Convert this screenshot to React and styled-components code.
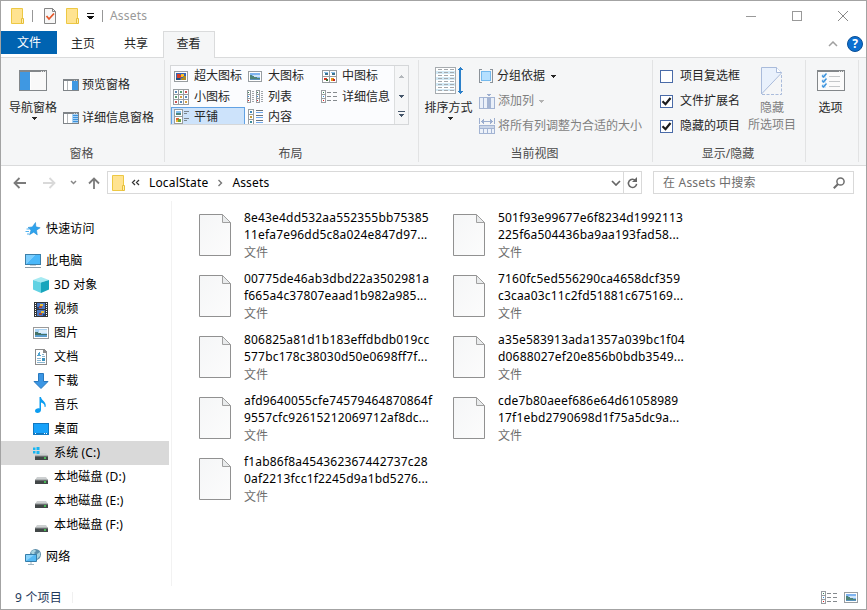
import React, { useState } from "react";
import styled, { createGlobalStyle } from "styled-components";

const GlobalStyle = createGlobalStyle`
  * {
    box-sizing: border-box;
  }

  body {
    margin: 0;
    overflow: hidden;
    font-family: "Noto Sans", "Noto Sans CJK SC", sans-serif;
    font-size: 12px;
    line-height: 16px;
    color: #000;
  }

  svg {
    display: block;
    flex: none;
  }
`;

const Window = styled.div`
  display: flex;
  flex-direction: column;
  width: 867px;
  height: 610px;
  background: #fff;
  border: 1px solid #a3a3a3;
`;

const TitleBar = styled.header`
  display: flex;
  align-items: center;
  height: 30px;
  padding: 0 18px 0 10px;
`;

const TitleDivider = styled.span`
  width: 1px;
  height: 12px;
  margin-left: ${(props) => props.$left}px;
  margin-right: ${(props) => props.$right}px;
  background: #979797;
`;

const QuickFolder = styled.span`
  margin: 0 7px 0 10px;
`;

const Title = styled.span`
  color: #999;
  letter-spacing: 0.2px;
`;

const WindowButtons = styled.div`
  display: flex;
  align-items: center;
  gap: 36px;
  margin-left: auto;
`;

const TabRow = styled.nav`
  display: flex;
  height: 27px;
  border-bottom: 1px solid #dadbdc;
`;

const FileTab = styled.button`
  width: 56px;
  height: 23px;
  padding: 0;
  border: none;
  background: #0063b1;
  color: #fff;
  font: inherit;
`;

const Tab = styled.button`
  width: ${(props) => props.$width}px;
  height: ${(props) => (props.$active ? 27 : 26)}px;
  padding: 0 1px 2px 0;
  border: 1px solid ${(props) => (props.$active ? "#dadbdc" : "transparent")};
  border-bottom: none;
  background: ${(props) => (props.$active ? "#f5f6f7" : "transparent")};
  color: #262626;
  font: inherit;
`;

const TabTools = styled.div`
  display: flex;
  align-items: center;
  gap: 9px;
  margin-left: auto;
  padding-right: 3px;
`;

const Help = styled.span`
  width: 16px;
  height: 16px;
  border: 1px solid #0a4f96;
  border-radius: 50%;
  background: #0c6fd0;
  color: #fff;
  font-weight: 700;
  line-height: 14px;
  text-align: center;
`;

const Ribbon = styled.section`
  display: flex;
  height: 108px;
  padding-top: 2px;
  background: #f5f6f7;
  border-bottom: 1px solid #dadbdc;
`;

const Group = styled.div`
  display: flex;
  flex-direction: column;
  width: ${(props) => props.$width}px;
  height: 102px;
  border-right: 1px solid #e2e3e4;
`;

const GroupBody = styled.div`
  display: flex;
  height: 86px;
  padding: ${(props) => props.$pad || "0"};
`;

const GroupLabel = styled.div`
  height: 16px;
  padding-right: 2px;
  text-align: center;
  color: #4c4c4c;
`;

const BigButton = styled.button`
  display: flex;
  flex-direction: column;
  align-items: center;
  width: ${(props) => props.$width}px;
  padding: ${(props) => props.$top}px 0 0 ${(props) => props.$left || 0}px;
  border: none;
  background: none;
  color: ${(props) => (props.$disabled ? "#7f7f7f" : "#262626")};
  font: inherit;
  line-height: 17px;
  white-space: nowrap;
`;

const BigIcon = styled.span`
  display: flex;
  justify-content: center;
  height: ${(props) => props.$height}px;
`;

const MenuCaret = styled.span`
  padding: 1px 0 0 3px;
`;

const InlineCaret = styled.span`
  padding-left: 2px;
`;

const ButtonStack = styled.div`
  display: flex;
  flex-direction: column;
  gap: ${(props) => props.$gap}px;
  padding: ${(props) => props.$pad};
`;

const SmallButton = styled.button`
  display: flex;
  align-items: center;
  gap: ${(props) => props.$gap || 3}px;
  height: 16px;
  padding: 0;
  border: none;
  background: none;
  color: ${(props) => (props.$disabled ? "#7f7f7f" : "#262626")};
  font: inherit;
  white-space: nowrap;
`;

const Gallery = styled.div`
  display: flex;
  width: 239px;
  height: 60px;
  border: 1px solid #d5d7d9;
  background: #fbfcfe;
`;

const GalleryGrid = styled.div`
  display: grid;
  grid-template-columns: 74px 74px 75px;
  grid-template-rows: 20px 21px 19px;
  width: 223px;
  height: 58px;
  overflow: hidden;
`;

const GalleryItem = styled.div`
  display: flex;
  align-items: center;
  gap: 5px;
  color: #262626;
  white-space: nowrap;
  border: ${(props) => (props.$active ? "1px solid #62a2e4" : "none")};
  padding: ${(props) => (props.$active ? "0 0 0 1px" : "0 0 0 2px")};
  background: ${(props) => (props.$active ? "#cde3fb" : "transparent")};
`;

const GalleryScroll = styled.div`
  display: grid;
  grid-template-rows: 20px 20px 16px;
  flex: 1;
  place-items: center;
  align-content: start;
  border-left: 1px solid #dcdedf;
  background: #f5f6f7;
`;

const CheckLabel = styled.label`
  display: flex;
  align-items: center;
  gap: 7px;
  height: 16px;
  color: #262626;
  white-space: nowrap;
`;

const CheckBox = styled.span`
  width: 13px;
  height: 13px;
  border: 1px solid #4a6ba8;
  background: #fff;
`;

const AddressRow = styled.div`
  display: flex;
  align-items: center;
  height: 33px;
  padding: 0 12px;
`;

const NavButtons = styled.div`
  display: flex;
  align-items: center;
  width: 94px;
`;

const NavIcon = styled.span`
  margin-right: ${(props) => props.$right}px;
`;

const AddressBox = styled.div`
  display: flex;
  align-items: center;
  width: 535px;
  height: 23px;
  padding-left: 4px;
  border: 1px solid #d9d9d9;
  white-space: nowrap;
`;

const Overflow = styled.span`
  margin-left: 5px;
`;

const Crumb = styled.span`
  margin: 0 9px;
  letter-spacing: 0.15px;
`;

const AddressTools = styled.div`
  display: flex;
  align-items: center;
  height: 21px;
  margin-left: auto;
`;

const Refresh = styled.span`
  display: flex;
  align-items: center;
  justify-content: center;
  width: 18px;
  height: 21px;
  margin-left: 2px;
  border-left: 1px solid #d9d9d9;
`;

const SearchBox = styled.div`
  display: flex;
  align-items: center;
  justify-content: space-between;
  width: 201px;
  height: 23px;
  margin-left: 11px;
  padding: 0 8px 0 9px;
  border: 1px solid #d9d9d9;
  color: #6d6d6d;
  letter-spacing: 0.2px;
`;

const Main = styled.main`
  display: flex;
  height: 387px;
  padding-top: 2px;
`;

const Sidebar = styled.aside`
  width: 171px;
  padding-top: 16px;
  border-right: 1px solid #f2f2f2;
`;

const TreeRow = styled.div`
  display: flex;
  align-items: center;
  gap: 5px;
  width: 168px;
  height: 24px;
  margin-top: ${(props) => props.$space || 0}px;
  padding-left: ${(props) => (props.$nested ? 32 : 24)}px;
  background: ${(props) => (props.$selected ? "#d9d9d9" : "transparent")};
  white-space: pre;
  letter-spacing: 0.15px;
`;

const FileGrid = styled.div`
  display: grid;
  grid-template-columns: 254px 254px;
  grid-auto-rows: 61px;
  padding: 8px 0 0 27px;
`;

const FileItem = styled.div`
  display: flex;
  gap: 13px;
`;

const FilePicture = styled.span`
  padding-top: 5px;
`;

const FileText = styled.div`
  line-height: 17px;
  white-space: nowrap;
`;

const FileName = styled.div`
  letter-spacing: 0.18px;
`;

const FileType = styled.div`
  margin-top: 1px;
  color: #6d6d6d;
`;

const StatusBar = styled.footer`
  display: flex;
  align-items: center;
  height: 23px;
  padding: 0 8px 0 14px;
  color: #1e395b;
  letter-spacing: 0.2px;
`;

const StatusDivider = styled.span`
  width: 1px;
  height: 11px;
  margin-left: 10px;
  background: #f0f0f0;
`;

const StatusViews = styled.div`
  display: flex;
  align-items: center;
  gap: 7px;
  margin-left: auto;
`;

const IconSlot = styled.span`
  display: flex;
  justify-content: center;
  width: 16px;
`;

const Svg = ({ w, h, smooth, children }) => (
  <svg
    width={w}
    height={h}
    viewBox={`0 0 ${w} ${h}`}
    fill="none"
    shapeRendering={smooth ? "auto" : "crispEdges"}
  >
    {children}
  </svg>
);

const Caret = ({ color = "#262626" }) => (
  <Svg w={5} h={3}>
    <path d="M0 0h5v1h-1v1h-1v1h-1v-1h-1v-1h-1z" fill={color} />
  </Svg>
);

const FolderIcon = () => (
  <Svg w={14} h={16} smooth>
    <path d="M.5.5h11v15h-11z" fill="#ffe391" stroke="#edc843" />
    <path d="M10.5 10.5h2v5h-2z" fill="#fff0ad" stroke="#e6be3a" />
  </Svg>
);

const CheckDocIcon = () => (
  <Svg w={12} h={16} smooth>
    <path d="M.5.5h8l3 3v12h-11z" fill="#f7f7f7" stroke="#858585" />
    <path d="M8.5.5v3h3" stroke="#858585" />
    <path d="M2.5 8l2.5 3 5-5.5" stroke="#e4572a" strokeWidth="1.8" />
  </Svg>
);

const PaneIcon = ({ kind }) => (
  <Svg w={16} h={12}>
    <rect width="16" height="12" fill="#7f8488" />
    <rect x="1" y="2" width="14" height="9" fill="#fff" />
    <path d="M11 1h1v1h-1zM13 1h1v1h-1z" fill="#d0d2d4" />
    <rect x="4" y="2" width="1" height="9" fill="#b5b9bc" />
    {kind === "preview" ? (
      <rect x="9" y="2" width="6" height="9" fill="#3f98e2" />
    ) : (
      <>
        <rect x="9" y="2" width="6" height="9" fill="#a9d2f5" />
        <path d="M10 3h5v1h-5zM10 5h5v1h-5zM10 7h5v1h-5zM10 9h5v1h-5z" fill="#3c92dc" />
      </>
    )}
  </Svg>
);

const NavPaneIcon = () => (
  <Svg w={28} h={21}>
    <rect width="28" height="21" fill="#83878a" />
    <rect x="1" y="2" width="26" height="18" fill="#f9f9f9" />
    <path d="M22 1h1v1h-1zM24 1h1v1h-1zM26 1h1v1h-1z" fill="#e4e4e4" />
    <rect x="1" y="2" width="10" height="18" fill="#3f98e2" />
    <rect x="11" y="2" width="1" height="18" fill="#fff" />
  </Svg>
);

// small landscape used by the view icons
const PhotoIcon = () => (
  <Svg w={14} h={11}>
    <rect width="14" height="11" fill="#989da1" />
    <rect x="1" y="1" width="12" height="9" fill="#fff" />
    <rect x="2" y="2" width="10" height="7" fill="#7fb4f0" />
    <rect x="5" y="4" width="7" height="2" fill="#cfe4f8" />
    <path d="M2 4h2v1h2v1h3v1h3v1H2z" fill="#4f8478" />
    <rect x="2" y="8" width="10" height="1" fill="#5a93bd" />
  </Svg>
);

const ExtraLargeIcon = () => (
  <Svg w={14} h={11}>
    <rect width="14" height="11" fill="#989da1" />
    <rect x="1" y="1" width="12" height="9" fill="#fff" />
    <rect x="2" y="2" width="10" height="7" fill="#3664b5" />
    <path d="M3 3h3v1h1v3h-4z" fill="#d9402a" />
    <path d="M7 3h3v3h-3z" fill="#ffbf25" />
    <path d="M9 5h3v4h-5v-2h2z" fill="#a98b2a" />
    <path d="M2 7h4v2h-4z" fill="#26507e" />
  </Svg>
);

const MediumIcon = () => (
  <Svg w={15} h={13}>
    <rect width="15" height="13" fill="#989da1" />
    <path d="M1 1h6v5h-6zM8 1h6v5h-6zM1 7h6v5h-6zM8 7h6v5h-6z" fill="#fff" />
    <path d="M2 2h4v1h-4zM9 2h4v1h-4z" fill="#8bc1ed" />
    <path d="M3 3h3v2h-3zM10 3h3v2h-3z" fill="#3b7390" />
    <path d="M2 8h3v2h-3z" fill="#d63624" />
    <path d="M4 9h2v2h-2z" fill="#3b6c31" />
    <path d="M9 8h3v3h-3z" fill="#e4941b" />
    <path d="M11 9h2v2h-2z" fill="#c92222" />
  </Svg>
);

const SmallGridIcon = () => (
  <Svg w={16} h={16}>
    <rect width="16" height="16" fill="#989da1" />
    {[1, 6, 11].map((y) => (
      <path key={y} d={`M1 ${y}h4v4h-4zM6 ${y}h4v4h-4zM11 ${y}h4v4h-4z`} fill="#fff" />
    ))}
    <path d="M2 2h2v2h-2zM12 7h2v2h-2zM7 12h2v2h-2z" fill="#5b8ab8" />
    <path d="M7 2h2v2h-2zM2 7h2v2h-2z" fill="#579a70" />
    <path d="M12 2h2v2h-2zM2 12h2v2h-2z" fill="#cf5050" />
    <path d="M7 7h2v2h-2zM12 12h2v2h-2z" fill="#d7a043" />
  </Svg>
);

const ListIcon = () => (
  <Svg w={16} h={13}>
    {[0, 9].map((x) => (
      <g key={x} transform={`translate(${x} 0)`}>
        <rect width="4" height="13" fill="#989da1" />
        <path d="M1 1h2v3h-2zM1 5h2v3h-2zM1 9h2v3h-2z" fill="#fff" />
        <path
          d="M5 1h2v1h-2zM5 3h2v1h-2zM5 5h2v1h-2zM5 7h2v1h-2zM5 9h2v1h-2zM5 11h2v1h-2z"
          fill="#a2a6aa"
        />
        <rect x="1" y="2" width="1" height="1" fill="#36845a" />
        <rect x="1" y="6" width="1" height="1" fill="#2b8bdf" />
        <rect x="1" y="10" width="1" height="1" fill="#d22" />
      </g>
    ))}
  </Svg>
);

const DetailsIcon = () => (
  <Svg w={16} h={13}>
    <rect width="5" height="13" fill="#989da1" />
    <path d="M1 1h3v3h-3zM1 5h3v3h-3zM1 9h3v3h-3z" fill="#fff" />
    <rect x="2" y="2" width="1" height="1" fill="#36845a" />
    <rect x="2" y="6" width="1" height="1" fill="#2b8bdf" />
    <rect x="2" y="10" width="1" height="1" fill="#d22" />
    <path
      d="M6 2h4v1h-4zM12 2h4v1h-4zM6 6h4v1h-4zM12 6h4v1h-4zM6 10h4v1h-4zM12 10h4v1h-4z"
      fill="#858a8e"
    />
  </Svg>
);

const TilesIcon = () => (
  <Svg w={15} h={15}>
    <rect width="9" height="15" fill="#989da1" />
    <path d="M1 1h7v6h-7zM1 8h7v6h-7z" fill="#fff" />
    <path d="M2 2h5v2h-5z" fill="#87bfed" />
    <path d="M2 4h5v2h-5z" fill="#4a8580" />
    <path d="M2 9h3v2h-3z" fill="#db6434" />
    <path d="M4 10h3v3h-3z" fill="#69a33a" />
    <path d="M2 11h2v2h-2z" fill="#eeb532" />
    <path d="M10 2h5v1h-5zM10 4h3v1h-3zM10 9h5v1h-5zM10 11h3v1h-3z" fill="#7b858d" />
  </Svg>
);

const ContentIcon = () => (
  <Svg w={15} h={16}>
    <rect width="6" height="16" fill="#989da1" />
    <path d="M1 1h4v4h-4zM1 6h4v4h-4zM1 11h4v4h-4z" fill="#fff" />
    <rect x="2" y="2" width="2" height="2" fill="#3f88bc" />
    <rect x="2" y="7" width="2" height="2" fill="#c59b37" />
    <rect x="2" y="12" width="2" height="2" fill="#3c8c9c" />
    <path d="M8 1h7v1h-7zM8 6h7v1h-7zM8 11h7v1h-7z" fill="#6b7177" />
    <path d="M8 3h7v1h-7zM8 8h7v1h-7zM8 13h7v1h-7z" fill="#6ea8ef" />
  </Svg>
);

const SortIcon = () => (
  <Svg w={28} h={27}>
    <rect width="21" height="27" fill="#a6abaf" />
    <rect x="1" y="1" width="19" height="25" fill="#fff" />
    <path d="M1 4h19v3h-19zM1 10h19v3h-19zM1 16h19v3h-19zM1 22h19v2h-19z" fill="#d3eaf6" />
    {[2, 5, 8, 11, 14, 17, 20, 23].map((y) => (
      <path key={y} d={`M3 ${y}h4v1h-4zM9 ${y}h4v1h-4zM15 ${y}h4v1h-4z`} fill="#a5a9ad" />
    ))}
    <path d="M24 2h2v23h-2z" fill="#2c80c9" />
    <path d="M25 0l3 3h-6zM25 27l3-3h-6z" fill="#2c80c9" />
  </Svg>
);

const GroupIcon = () => (
  <Svg w={14} h={14}>
    <path d="M0 0h3v1H1v12h2v1H0zM14 0h-3v1h2v12h-2v1h3z" fill="#8b9299" />
    <rect x="2" y="2" width="10" height="10" fill="#74b9ed" />
    <rect x="3" y="3" width="8" height="8" fill="#b5e0ff" />
  </Svg>
);

const AddColumnIcon = () => (
  <Svg w={16} h={15}>
    <rect y="3" width="16" height="12" fill="#a3b4d3" />
    <path d="M1 4h3v10h-3zM5 4h3v10h-3zM12 4h3v10h-3z" fill="#eaf0f9" />
    <path d="M8 0h4v1h-1v1h-2v-1h-1z" fill="#9caecf" />
  </Svg>
);

const FitColumnsIcon = () => (
  <Svg w={16} h={16}>
    <path d="M0 0h1v6h-1zM15 0h1v6h-1zM2 3h12v1h-12z" fill="#9caecf" />
    <path d="M3 2h1v3h-1zM4 1h1v5h-1zM11 1h1v5h-1zM12 2h1v3h-1z" fill="#9caecf" />
    <rect y="7" width="16" height="9" fill="#a3b4d3" />
    <rect x="1" y="8" width="14" height="2" fill="#cbd6e8" />
    <path d="M1 11h3v4h-3zM5 11h3v4h-3zM9 11h3v4h-3zM13 11h2v4h-2z" fill="#edf2fa" />
  </Svg>
);

const HideIcon = () => (
  <Svg w={22} h={28} smooth>
    <path d="M.5.5h15l5 5L.5 27z" fill="#e9f1fc" />
    <path d="M.5 27V.5h15l5 5V6L.5 27" stroke="#a9bbdb" />
    <path d="M15.5.5v5h5" fill="#fff" stroke="#a9bbdb" />
    <path d="M20.5 8v19.5H.5" stroke="#a9bbdb" strokeDasharray="3 1.5" />
  </Svg>
);

const OptionsIcon = () => (
  <Svg w={28} h={21}>
    <rect width="28" height="21" fill="#83878a" />
    <rect x="1" y="2" width="26" height="18" fill="#fbfbfb" />
    <path d="M22 1h1v1h-1zM24 1h1v1h-1zM26 1h1v1h-1z" fill="#e4e4e4" />
    {[4, 9, 14].map((y) => (
      <g key={y}>
        <rect x="5" y={y} width="4" height="4" fill="#d2e7f8" />
        <path
          d={`M5 ${y + 1.5}l1.5 1.5 3-3.5`}
          stroke="#3a92dc"
          strokeWidth="1.4"
          shapeRendering="auto"
        />
        <rect x="12" y={y + 2} width="11" height="1" fill="#c4c7c9" />
      </g>
    ))}
  </Svg>
);

const FileIcon = () => (
  <Svg w={32} h={42} smooth>
    <defs>
      <linearGradient id="paper" x1="0" y1="0" x2="1" y2="1">
        <stop offset="0" stopColor="#f5f6f7" />
        <stop offset="1" stopColor="#fcfcfc" />
      </linearGradient>
    </defs>
    <path d="M.5.5h23l8 8v33H.5z" fill="url(#paper)" stroke="#919191" />
    <path d="M23.5.5v8h8z" fill="#e9ebec" stroke="#a0a0a0" />
  </Svg>
);

const DriveIcon = ({ system }) => (
  <Svg w={16} h={16} smooth>
    {system && (
      <path d="M0 2.5h2.5V5H0zM3.5 2h3v3h-3zM0 6h2.5v2.5H0zM3.5 6h3v3h-3z" fill="#17b5f2" />
    )}
    <path d={system ? "M7.5 8H13l2 3H2l1-2h4.5z" : "M4 8h9l2 3H2z"} fill="#cdd0d1" />
    <path d="M2 11h13v4H2z" fill="#424748" />
    <path d="M2 11h13" stroke="#8d9293" />
    <path d="M11 13h2" stroke="#47dd57" strokeWidth="1.5" />
  </Svg>
);

const treeIcons = {
  star: (
    <Svg w={16} h={16} smooth>
      <path
        d="M10.5 1.5l.4 4.300 4.300 1-3.700 2.400.8 4.700-3.600-2.700-4.200 2.600 1.500-4.600L3 6.500l4.300-.6z"
        fill="#2ea3ed"
        stroke="#1b85cf"
        strokeWidth=".5"
      />
      <path d="M1.5 8h3M.5 10.5H4M2 13h2" stroke="#4fb2f0" />
    </Svg>
  ),
  pc: (
    <Svg w={16} h={16}>
      <rect y="1" width="16" height="11" fill="#3c7fa9" />
      <rect x="1" y="2" width="14" height="9" fill="#4ab8fa" />
      <path d="M1 11V2h9z" fill="#7bcdfd" />
      <rect y="14" width="16" height="1" fill="#8d9ca6" />
      <rect x="5" y="12" width="6" height="1" fill="#c3d1da" />
    </Svg>
  ),
  cube: (
    <Svg w={16} h={16} smooth>
      <path d="M8 0l8 3-8 2.5L0 3z" fill="#a6eaf2" />
      <path d="M0 3l8 2.5V16l-8-3.5z" fill="#61d2e3" />
      <path d="M16 3L8 5.5V16l8-3.5z" fill="#18a5bc" />
    </Svg>
  ),
  video: (
    <Svg w={14} h={15}>
      <rect width="14" height="15" fill="#333638" />
      <path d="M1.5 1v14M12.5 1v14" stroke="#fff" strokeDasharray="1 1" />
      <path d="M3 1h8v6H3zM3 8h8v6H3z" fill="#4b78c4" />
      <path d="M5 4h3v2H5zM5 11h3v2H5z" fill="#a84a32" />
      <path d="M6 2h3v2H6zM7 9h3v2H7z" fill="#e3bf3c" />
      <path d="M3 5h2v2H3zM9 12h2v2H9z" fill="#294577" />
    </Svg>
  ),
  picture: (
    <Svg w={16} h={12}>
      <rect width="16" height="12" fill="#9a9a9a" />
      <rect x="1" y="1" width="14" height="10" fill="#fff" />
      <rect x="2" y="2" width="12" height="8" fill="#a9d2f3" />
      <rect x="6" y="3" width="8" height="3" fill="#ddeefa" />
      <path d="M2 5h3v1h3v1h6v1H2z" fill="#447267" />
      <rect x="2" y="8" width="12" height="2" fill="#5b9ccb" />
    </Svg>
  ),
  doc: (
    <Svg w={12} h={16}>
      <path d="M0 0h9l3 3v13H0z" fill="#8c8c8c" />
      <path d="M1 1h7v3h3v11H1z" fill="#fff" />
      <path d="M4 3h1v3h1v1H2V6h1V4h1z" fill="#4fa3d0" />
      <path d="M7 5h2v1H7zM7 7h3v1H7zM2 9h4v1H2zM2 11h4v1H2zM2 13h8v1H2z" fill="#8ab4cf" />
      <rect x="7" y="9" width="3" height="3" fill="#3c91bd" />
    </Svg>
  ),
  download: (
    <Svg w={16} h={16} smooth>
      <path d="M5.5.5h5v8H15l-7 7-7-7h4.500z" fill="#3b96e4" stroke="#2878be" />
    </Svg>
  ),
  music: (
    <Svg w={14} h={16} smooth>
      <path
        d="M5.5 0H7c0 3.500 6 4.500 4.500 10h-1C11 7.500 9 6 7 5.500V13c0 3.500-6 4-6 1 0-2 2.500-3 4.500-2.500z"
        fill="#0c9df1"
      />
    </Svg>
  ),
  desktop: (
    <Svg w={16} h={12}>
      <rect width="16" height="12" fill="#1278c0" />
      <rect x="1" y="1" width="14" height="9" fill="#18a2fa" />
      <path d="M2 10h1v1H2zM11 10h1v1h-1zM13 10h1v1h-1z" fill="#fff" />
    </Svg>
  ),
  system: <DriveIcon system />,
  drive: <DriveIcon />,
  network: (
    <Svg w={16} h={16} smooth>
      <circle cx="10.5" cy="5.5" r="5.5" fill="#5d8fab" />
      <path d="M6 3c2-3 5-2 5-1L9 4l2 2-3 2zM12 5l3-2v4l-3 3z" fill="#a9d3df" />
      <path d="M.5 5.500h11v7H.5z" fill="#55b9f4" stroke="#357da9" />
      <path d="M1 12V6h8z" fill="#89d3fc" />
      <path d="M3 15.500h6M6 13v2" stroke="#a0b5c2" />
    </Svg>
  ),
};

const galleryItems = [
  { name: "超大图标", icon: <ExtraLargeIcon /> },
  { name: "大图标", icon: <PhotoIcon /> },
  { name: "中图标", icon: <MediumIcon /> },
  { name: "小图标", icon: <SmallGridIcon /> },
  { name: "列表", icon: <ListIcon /> },
  { name: "详细信息", icon: <DetailsIcon /> },
  { name: "平铺", icon: <TilesIcon /> },
  { name: "内容", icon: <ContentIcon /> },
];

const tree = [
  { name: "快速访问", icon: "star" },
  { name: "此电脑", icon: "pc", space: 8 },
  { name: "3D 对象", icon: "cube", nested: true },
  { name: "视频", icon: "video", nested: true },
  { name: "图片", icon: "picture", nested: true },
  { name: "文档", icon: "doc", nested: true },
  { name: "下载", icon: "download", nested: true },
  { name: "音乐", icon: "music", nested: true },
  { name: "桌面", icon: "desktop", nested: true },
  { name: "系统 (C:)", icon: "system", nested: true },
  { name: "本地磁盘 (D:)", icon: "drive", nested: true },
  { name: "本地磁盘 (E:)", icon: "drive", nested: true },
  { name: "本地磁盘 (F:)", icon: "drive", nested: true },
  { name: "网络", icon: "network", space: 8 },
];

const files = [
  ["8e43e4dd532aa552355bb75385", "11efa7e96dd5c8a024e847d97..."],
  ["501f93e99677e6f8234d1992113", "225f6a504436ba9aa193fad58..."],
  ["00775de46ab3dbd22a3502981a", "f665a4c37807eaad1b982a985..."],
  ["7160fc5ed556290ca4658dcf359", "c3caa03c11c2fd51881c675169..."],
  ["806825a81d1b183effdbdb019cc", "577bc178c38030d50e0698ff7f..."],
  ["a35e583913ada1357a039bc1f04", "d0688027ef20e856b0bdb3549..."],
  ["afd9640055cfe74579464870864f", "9557cfc92615212069712af8dc..."],
  ["cde7b80aeef686e64d61058989", "17f1ebd2790698d1f75a5dc9a..."],
  ["f1ab86f8a454362367442737c28", "0af2213fcc1f2245d9a1bd5276..."],
];

const Check = ({ label, checked, onClick }) => (
  <CheckLabel onClick={onClick}>
    <CheckBox>
      {checked && (
        <Svg w={11} h={11} smooth>
          <path d="M1.5 5.200l3 3 5-6.200" stroke="#1b1b1b" strokeWidth="2.200" />
        </Svg>
      )}
    </CheckBox>
    {label}
  </CheckLabel>
);

const Header = () => (
  <>
    <TitleBar>
      <FolderIcon />
      <TitleDivider $left={7} $right={11} />
      <CheckDocIcon />
      <QuickFolder>
        <FolderIcon />
      </QuickFolder>
      <Svg w={7} h={6}>
        <path d="M0 0h7v1h-7zM0 3h7v1h-1v1h-1v1h-3v-1h-1v-1h-1z" fill="#111" />
      </Svg>
      <TitleDivider $left={8} $right={7} />
      <Title>Assets</Title>
      <WindowButtons>
        <Svg w={10} h={10}>
          <rect y="5" width="10" height="1" fill="#999" />
        </Svg>
        <Svg w={10} h={10}>
          <path d="M0 0h10v10H0zM1 1v8h8V1z" fill="#999" fillRule="evenodd" />
        </Svg>
        <Svg w={10} h={10} smooth>
          <path d="M0 0l10 10M10 0l-10 10" stroke="#888" />
        </Svg>
      </WindowButtons>
    </TitleBar>
    <TabRow>
      <FileTab>文件</FileTab>
      <Tab $width={53}>主页</Tab>
      <Tab $width={53}>共享</Tab>
      <Tab $width={52} $active>查看</Tab>
      <TabTools>
        <Svg w={10} h={6} smooth>
          <path d="M1 5l4-4 4 4" stroke="#a0a0a0" strokeWidth="1.500" />
        </Svg>
        <Help>?</Help>
      </TabTools>
    </TabRow>
  </>
);

const App = () => {
  const [view, setView] = useState("平铺");
  const [selected, setSelected] = useState("系统 (C:)");
  const [options, setOptions] = useState({
    项目复选框: false,
    文件扩展名: true,
    隐藏的项目: true,
  });

  return (
    <>
      <GlobalStyle />
      <Window>
        <Header />
        <Ribbon>
          <Group $width={164}>
            <GroupBody>
              <BigButton $width={62} $top={10} $left={2}>
                <BigIcon $height={29}><NavPaneIcon /></BigIcon>
                导航窗格
                <MenuCaret><Caret /></MenuCaret>
              </BigButton>
              <ButtonStack $gap={17} $pad="17px 0 0 0">
                <SmallButton><PaneIcon kind="preview" />预览窗格</SmallButton>
                <SmallButton><PaneIcon kind="details" />详细信息窗格</SmallButton>
              </ButtonStack>
            </GroupBody>
            <GroupLabel>窗格</GroupLabel>
          </Group>

          <Group $width={254}>
            <GroupBody $pad="5px 0 0 5px">
              <Gallery>
                <GalleryGrid>
                  {galleryItems.map((item) => (
                    <GalleryItem
                      key={item.name}
                      $active={view === item.name}
                      onClick={() => setView(item.name)}
                    >
                      <IconSlot>{item.icon}</IconSlot>
                      {item.name}
                    </GalleryItem>
                  ))}
                </GalleryGrid>
                <GalleryScroll>
                  <Svg w={5} h={3}>
                    <path d="M2 0h1v1h1v1h1v1h-5v-1h1v-1h1z" fill="#b4b8bc" />
                  </Svg>
                  <Caret color="#45566a" />
                  <Svg w={7} h={6}>
                    <path d="M0 0h7v1h-7zM1 3h5v1h-1v1h-1v1h-1v-1h-1v-1h-1z" fill="#45566a" />
                  </Svg>
                </GalleryScroll>
              </Gallery>
            </GroupBody>
            <GroupLabel>布局</GroupLabel>
          </Group>

          <Group $width={234}>
            <GroupBody>
              <BigButton $width={59} $top={7}>
                <BigIcon $height={32}><SortIcon /></BigIcon>
                排序方式
                <MenuCaret><Caret /></MenuCaret>
              </BigButton>
              <ButtonStack $gap={9} $pad="8px 0 0 1px">
                <SmallButton $gap={4}>
                  <GroupIcon />分组依据
                  <InlineCaret><Caret /></InlineCaret>
                </SmallButton>
                <SmallButton $disabled>
                  <AddColumnIcon />添加列
                  <InlineCaret><Caret color="#b3b3b3" /></InlineCaret>
                </SmallButton>
                <SmallButton $disabled><FitColumnsIcon />将所有列调整为合适的大小</SmallButton>
              </ButtonStack>
            </GroupBody>
            <GroupLabel>当前视图</GroupLabel>
          </Group>

          <Group $width={153}>
            <GroupBody>
              <ButtonStack $gap={9} $pad="8px 0 0 7px">
                {Object.keys(options).map((label) => (
                  <Check
                    key={label}
                    label={label}
                    checked={options[label]}
                    onClick={() => setOptions({ ...options, [label]: !options[label] })}
                  />
                ))}
              </ButtonStack>
              <BigButton $width={64} $top={7} $disabled>
                <BigIcon $height={32}><HideIcon /></BigIcon>
                <span>隐藏</span>
                <span>所选项目</span>
              </BigButton>
            </GroupBody>
            <GroupLabel>显示/隐藏</GroupLabel>
          </Group>

          <Group $width={53}>
            <GroupBody>
              <BigButton $width={49} $top={10}>
                <BigIcon $height={29}><OptionsIcon /></BigIcon>
                选项
              </BigButton>
            </GroupBody>
          </Group>
        </Ribbon>

        <AddressRow>
          <NavButtons>
            <NavIcon $right={17}>
              <Svg w={13} h={12} smooth>
                <path d="M13 6H2M6.500 1L1.500 6l5 5" stroke="#7b7b7b" strokeWidth="1.800" />
              </Svg>
            </NavIcon>
            <NavIcon $right={14}>
              <Svg w={13} h={12} smooth>
                <path d="M0 6h11M6.500 1l5 5-5 5" stroke="#d9d9d9" strokeWidth="1.800" />
              </Svg>
            </NavIcon>
            <NavIcon $right={11}>
              <Svg w={7} h={5} smooth>
                <path d="M1 1l2.500 2.500L6 1" stroke="#888" strokeWidth="1.500" />
              </Svg>
            </NavIcon>
            <Svg w={12} h={12} smooth>
              <path d="M6 12V2M1 6.500l5-5 5 5" stroke="#7b7b7b" strokeWidth="1.800" />
            </Svg>
          </NavButtons>
          <AddressBox>
            <FolderIcon />
            <Overflow>
              <Svg w={9} h={7} smooth>
                <path d="M4 1L1.500 3.500 4 6M8 1L5.500 3.500 8 6" stroke="#333" strokeWidth="1.300" />
              </Svg>
            </Overflow>
            <Crumb>LocalState</Crumb>
            <Svg w={6} h={8} smooth>
              <path d="M1.500 1l3 3-3 3" stroke="#777" strokeWidth="1.400" />
            </Svg>
            <Crumb>Assets</Crumb>
            <AddressTools>
              <Svg w={10} h={6} smooth>
                <path d="M1 1l4 4 4-4" stroke="#666" strokeWidth="1.700" />
              </Svg>
              <Refresh>
                <Svg w={11} h={12} smooth>
                  <path d="M8.600 3.600A4.100 4.100 0 1 0 9.600 6.800" stroke="#666" strokeWidth="1.500" />
                  <path d="M10 0v5H5z" fill="#666" />
                </Svg>
              </Refresh>
            </AddressTools>
          </AddressBox>
          <SearchBox>
            在 Assets 中搜索
            <Svg w={12} h={12} smooth>
              <circle cx="7.500" cy="4.500" r="3.600" stroke="#6d6d6d" strokeWidth="1.500" />
              <path d="M5 7L.8 11.200" stroke="#6d6d6d" strokeWidth="2" />
            </Svg>
          </SearchBox>
        </AddressRow>

        <Main>
          <Sidebar>
            {tree.map((item) => (
              <TreeRow
                key={item.name}
                $space={item.space}
                $nested={item.nested}
                $selected={selected === item.name}
                onClick={() => setSelected(item.name)}
              >
                <IconSlot>{treeIcons[item.icon]}</IconSlot>
                {item.name}
              </TreeRow>
            ))}
          </Sidebar>
          <FileGrid>
            {files.map(([first, second]) => (
              <FileItem key={first}>
                <FilePicture><FileIcon /></FilePicture>
                <FileText>
                  <FileName>{first}</FileName>
                  <FileName>{second}</FileName>
                  <FileType>文件</FileType>
                </FileText>
              </FileItem>
            ))}
          </FileGrid>
        </Main>

        <StatusBar>
          9 个项目
          <StatusDivider />
          <StatusViews>
            <DetailsIcon />
            <PhotoIcon />
          </StatusViews>
        </StatusBar>
      </Window>
    </>
  );
};

export default App;
